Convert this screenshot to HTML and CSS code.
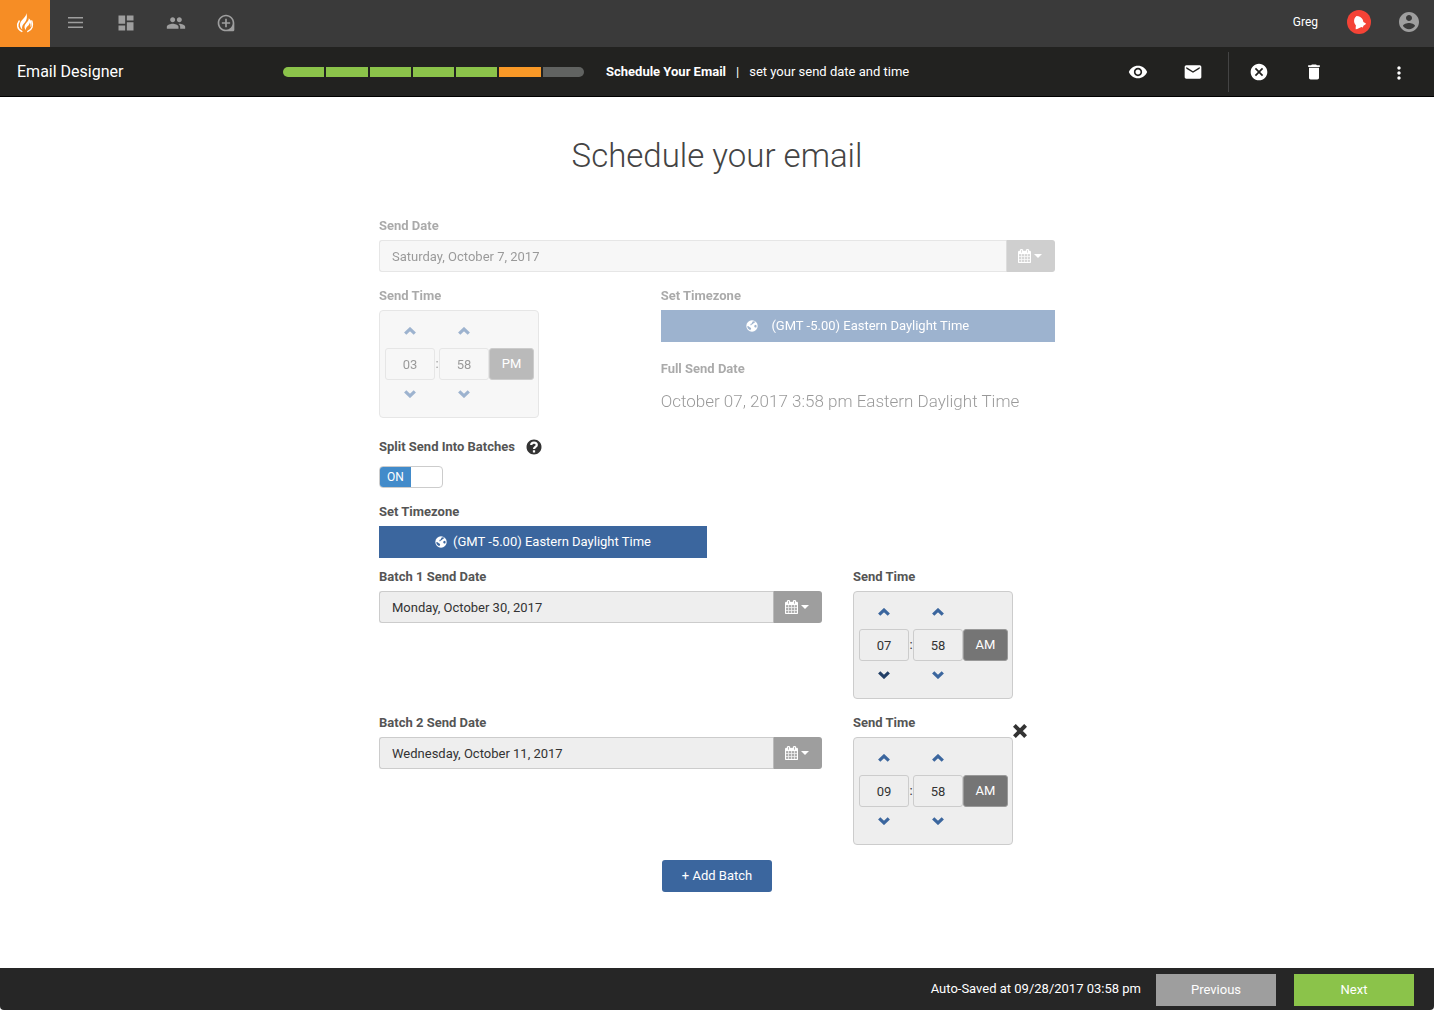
FILE: index.html
```html
<!DOCTYPE html>
<html lang="en">
<head>
<meta charset="utf-8">
<meta name="viewport" content="width=device-width, initial-scale=1">
<title>Email Designer</title>
<link rel="stylesheet" href="styles.css">
</head>
<body>
<svg class="sprite" aria-hidden="true">
  <symbol id="calendar" viewBox="0 0 1664 1792"><path d="M128 1664h288v-288h-288v288zm352 0h320v-288h-320v288zm-352-352h288v-320h-288v320zm352 0h320v-320h-320v320zm-352-384h288v-288h-288v288zm736 736h320v-288h-320v288zm-384-736h320v-288h-320v288zm768 736h288v-288h-288v288zm-384-352h320v-320h-320v320zm-352-864v-288q0-13-9.500-22.500t-22.500-9.500h-64q-13 0-22.500 9.500t-9.500 22.500v288q0 13 9.500 22.500t22.500 9.500h64q13 0 22.500-9.500t9.500-22.500zm736 864h288v-320h-288v320zm-384-384h320v-288h-320v288zm384 0h288v-288h-288v288zm32-480v-288q0-13-9.500-22.500t-22.500-9.500h-64q-13 0-22.500 9.500t-9.500 22.500v288q0 13 9.500 22.500t22.500 9.500h64q13 0 22.500-9.500t9.500-22.500zm384-64v1280q0 52-38 90t-90 38h-1408q-52 0-90-38t-38-90v-1280q0-52 38-90t90-38h128v-96q0-66 47-113t113-47h64q66 0 113 47t47 113v96h384v-96q0-66 47-113t113-47h64q66 0 113 47t47 113v96h128q52 0 90 38t38 90z" stroke="currentColor" stroke-width="40"/></symbol>
  <symbol id="caret" viewBox="0 0 8 4"><path d="M0 0h8L4 4z"/></symbol>
  <symbol id="up" viewBox="0 0 12 8"><path d="M1.200 6.700 6 2.100l4.800 4.600" fill="none" stroke="currentColor" stroke-width="3.200"/></symbol>
  <symbol id="down" viewBox="0 0 12 8"><path d="M1.200 1.300 6 5.900l4.800-4.600" fill="none" stroke="currentColor" stroke-width="3.200"/></symbol>
  <symbol id="globe" viewBox="0 0 12 12"><circle cx="6" cy="6" r="5.700"/><path class="globe-land" d="M6.600 1.400 8.300 1.300l1 1-1.600.6-.7 1.200-1.300.5-.7.8-.6-.4.300-1.200 1.100-.4zM8.500 5.200l1.500-.5.700 1.400-.5 1.500-1.200-.2-.8-.9zM1.300 5.900l1.300.4 1.500 1.200 1.100.6-.4 1.100-.5 1-1.500-.9L1.600 8z"/></symbol>
</svg>

<header class="topbar">
  <a class="logo" href="#" aria-label="Home"><svg width="18" height="22" viewBox="0 0 18 22"><path fill="none" stroke="#fff" stroke-width="1.500" stroke-linecap="round" d="M3.200 9C.8 12.500 1 17.300 5.800 19.400M15.800 9c1.600 4.500.3 8.700-4 10.400"/><path fill="#fff" d="M10.200 1c.8 3.300-4.800 6.300-6 10.300-.7 2.600.2 4.900 2.100 6.100-.8-2.800.4-4.700 2.300-6.700 1.700-1.900 3.300-5.300 1.600-9.700zM12.700 6.200c.5 2.900-3.500 4.800-4.100 7.700-.3 1.700.3 3.200 1.200 4.100 0-1.900.8-2.900 2-4 1.200-1.200 1.900-2 1.900-3.500.9 1.300 1 3 .6 4.800 2.300-2.800 1.500-7-1.600-9.100z"/></svg></a>
  <nav class="topnav" aria-label="Main">
    <a href="#" aria-label="Menu"><svg width="15" height="11" viewBox="0 0 15 11"><path d="M0 0h15v1.500H0zM0 4.700h15v1.500H0zM0 9.400h15v1.500H0z"/></svg></a>
    <a href="#" aria-label="Dashboard"><svg width="20" height="20" viewBox="0 0 24 24"><path d="M3 13h8V3H3v10zm0 8h8v-6H3v6zm10 0h8V11h-8v10zm0-18v6h8V3h-8z"/></svg></a>
    <a href="#" aria-label="Contacts"><svg width="20" height="20" viewBox="0 0 24 24"><path d="M16 11c1.660 0 2.990-1.340 2.990-3S17.660 5 16 5s-3 1.340-3 3 1.340 3 3 3zm-8 0c1.660 0 2.990-1.340 2.990-3S9.660 5 8 5 5 6.340 5 8s1.340 3 3 3zm0 2c-2.330 0-7 1.170-7 3.500V19h14v-2.500c0-2.330-4.670-3.500-7-3.500zm8 0c-.29 0-.62.02-.97.05 1.160.84 1.970 1.970 1.970 3.450V19h6v-2.500c0-2.330-4.670-3.500-7-3.500z"/></svg></a>
    <a href="#" aria-label="Add"><svg width="20" height="20" viewBox="0 0 24 24"><path d="M13 7h-2v4H7v2h4v4h2v-4h4v-2h-4V7zm-1-5C6.490 2 2 6.490 2 12s4.490 10 10 10h8c1.100 0 2-.9 2-2v-8c0-5.510-4.490-10-10-10zm0 18c-4.410 0-8-3.590-8-8s3.590-8 8-8 8 3.590 8 8-3.590 8-8 8z"/></svg></a>
  </nav>
  <div class="user">
    <span class="user-name">Greg</span>
    <button class="cell" aria-label="Notifications"><svg width="24" height="24" viewBox="0 0 24 24"><circle cx="12" cy="12" r="12" fill="#f44336"/><path fill="#fff" d="M8.300 7.300 9.500 6c2.700.2 5.300 1.500 6.300 3.700l.6 2.300 2.600 1.400-.6 1-2 1.400-.5 1.700-1.500-.5-4.200 2-1.500.3v-2.300l.3-1.300-1.500-2.500c-.7-2-.5-4.200.8-5.900z"/></svg></button>
    <button class="cell" aria-label="Account"><svg width="24" height="24" viewBox="0 0 24 24" fill="#9e9e9e"><path d="M12 2C6.480 2 2 6.480 2 12s4.480 10 10 10 10-4.480 10-10S17.520 2 12 2zm0 3c1.660 0 3 1.340 3 3s-1.340 3-3 3-3-1.340-3-3 1.340-3 3-3zm0 14.200c-2.500 0-4.710-1.280-6-3.220.03-1.990 4-3.080 6-3.080 1.990 0 5.970 1.090 6 3.080-1.290 1.940-3.500 3.220-6 3.220z"/></svg></button>
  </div>
</header>

<div class="toolbar">
  <div class="app-name">Email Designer</div>
  <div class="steps" role="img" aria-label="Step 6 of 7">
    <span class="step done"></span><span class="step done"></span><span class="step done"></span><span class="step done"></span><span class="step done"></span><span class="step current"></span><span class="step"></span>
  </div>
  <div class="step-text"><strong>Schedule Your Email</strong><span>|</span><span>set your send date and time</span></div>
  <div class="actions">
    <button class="action" aria-label="Preview"><svg width="20" height="20" viewBox="0 0 24 24"><path d="M12 4.500C7 4.500 2.730 7.610 1 12c1.730 4.390 6 7.500 11 7.500s9.270-3.110 11-7.500c-1.730-4.390-6-7.500-11-7.500zM12 17c-2.760 0-5-2.240-5-5s2.240-5 5-5 5 2.240 5 5-2.240 5-5 5zm0-8c-1.660 0-3 1.340-3 3s1.340 3 3 3 3-1.340 3-3-1.340-3-3-3z"/></svg></button>
    <button class="action" aria-label="Send test"><svg width="20" height="20" viewBox="0 0 24 24"><path d="M20 4H4c-1.100 0-1.990.9-1.990 2L2 18c0 1.100.9 2 2 2h16c1.100 0 2-.9 2-2V6c0-1.100-.9-2-2-2zm0 4l-8 5-8-5V6l8 5 8-5v2z"/></svg></button>
    <span class="divider"></span>
    <button class="action" aria-label="Cancel"><svg width="20" height="20" viewBox="0 0 24 24"><path d="M12 2C6.470 2 2 6.470 2 12s4.470 10 10 10 10-4.470 10-10S17.530 2 12 2zm5 13.590L15.590 17 12 13.410 8.410 17 7 15.590 10.590 12 7 8.410 8.410 7 12 10.590 15.590 7 17 8.410 13.410 12 17 15.590z"/></svg></button>
    <button class="action" aria-label="Delete"><svg width="20" height="20" viewBox="0 0 24 24"><path d="M6 19c0 1.100.9 2 2 2h8c1.100 0 2-.9 2-2V7H6v12zM19 4h-3.500l-1-1h-5l-1 1H5v2h14V4z"/></svg></button>
    <button class="more" aria-label="More"><svg width="20" height="20" viewBox="0 0 24 24"><path d="M12 8c1.100 0 2-.9 2-2s-.9-2-2-2-2 .9-2 2 .9 2 2 2zm0 2c-1.100 0-2 .9-2 2s.9 2 2 2 2-.9 2-2-.9-2-2-2zm0 6c-1.100 0-2 .9-2 2s.9 2 2 2 2-.9 2-2-.9-2-2-2z"/></svg></button>
  </div>
</div>

<main class="content">
  <h1>Schedule your email</h1>
  <form class="schedule">
    <fieldset class="main-send" disabled>
      <div class="field">
        <label for="send-date">Send Date</label>
        <div class="date-group">
          <input id="send-date" type="text" value="Saturday, October 7, 2017">
          <button type="button" aria-label="Pick date"><svg width="13" height="14"><use href="#calendar"/></svg><svg width="8" height="4"><use href="#caret"/></svg></button>
        </div>
      </div>
      <div class="send-row">
        <div class="field">
          <label for="hour">Send Time</label>
          <div class="time">
            <button type="button" class="arrow" aria-label="Hour up"><svg width="12" height="8"><use href="#up"/></svg></button>
            <span></span>
            <button type="button" class="arrow" aria-label="Minute up"><svg width="12" height="8"><use href="#up"/></svg></button>
            <span></span>
            <input id="hour" type="text" value="03"><span>:</span><input type="text" value="58" aria-label="Minute">
            <button type="button" class="meridian">PM</button>
            <button type="button" class="arrow" aria-label="Hour down"><svg width="12" height="8"><use href="#down"/></svg></button>
            <span></span>
            <button type="button" class="arrow" aria-label="Minute down"><svg width="12" height="8"><use href="#down"/></svg></button>
          </div>
        </div>
        <div class="zone-column">
          <div class="field">
            <label for="zone">Set Timezone</label>
            <button type="button" id="zone" class="zone wide"><svg width="12" height="12"><use href="#globe"/></svg>(GMT -5.00) Eastern Daylight Time</button>
          </div>
          <div class="full-date">
            <h2>Full Send Date</h2>
            <p>October 07, 2017 3:58 pm Eastern Daylight Time</p>
          </div>
        </div>
      </div>
    </fieldset>

    <div class="split">
      <div class="split-head">
        <label for="split">Split Send Into Batches</label>
        <svg width="18" height="18" viewBox="0 0 24 24" fill="#444"><path d="M12 2C6.480 2 2 6.480 2 12s4.480 10 10 10 10-4.480 10-10S17.520 2 12 2z"/><path fill="none" stroke="#fff" stroke-width="3" d="M8.300 9.400C8.300 7.300 9.900 6.200 12 6.200s3.700 1.100 3.700 3.200c0 2.500-3.700 2.600-3.700 5.300M12 16.200v3"/></svg>
      </div>
      <label class="switch"><input id="split" type="checkbox" role="switch" checked><span class="switch-on">ON</span></label>
    </div>

    <div class="field batch-zone">
      <label for="batch-tz">Set Timezone</label>
      <button type="button" id="batch-tz" class="zone"><svg width="12" height="12"><use href="#globe"/></svg>(GMT -5.00) Eastern Daylight Time</button>
    </div>

    <div class="batches">
      <div class="batch">
        <div class="field">
          <label for="batch-1">Batch 1 Send Date</label>
          <div class="date-group">
            <input id="batch-1" type="text" value="Monday, October 30, 2017">
            <button type="button" aria-label="Pick date"><svg width="13" height="14"><use href="#calendar"/></svg><svg width="8" height="4"><use href="#caret"/></svg></button>
          </div>
        </div>
        <div class="field">
          <label for="hour-1">Send Time</label>
          <div class="time">
            <button type="button" class="arrow" aria-label="Hour up"><svg width="12" height="8"><use href="#up"/></svg></button>
            <span></span>
            <button type="button" class="arrow" aria-label="Minute up"><svg width="12" height="8"><use href="#up"/></svg></button>
            <span></span>
            <input id="hour-1" type="text" value="07"><span>:</span><input type="text" value="58" aria-label="Minute">
            <button type="button" class="meridian">AM</button>
            <button type="button" class="arrow active" aria-label="Hour down"><svg width="12" height="8"><use href="#down"/></svg></button>
            <span></span>
            <button type="button" class="arrow" aria-label="Minute down"><svg width="12" height="8"><use href="#down"/></svg></button>
          </div>
        </div>
      </div>
      <div class="batch">
        <div class="field">
          <label for="batch-2">Batch 2 Send Date</label>
          <div class="date-group">
            <input id="batch-2" type="text" value="Wednesday, October 11, 2017">
            <button type="button" aria-label="Pick date"><svg width="13" height="14"><use href="#calendar"/></svg><svg width="8" height="4"><use href="#caret"/></svg></button>
          </div>
        </div>
        <div class="field">
          <label for="hour-2">Send Time</label>
          <div class="time">
            <button type="button" class="arrow" aria-label="Hour up"><svg width="12" height="8"><use href="#up"/></svg></button>
            <span></span>
            <button type="button" class="arrow" aria-label="Minute up"><svg width="12" height="8"><use href="#up"/></svg></button>
            <span></span>
            <input id="hour-2" type="text" value="09"><span>:</span><input type="text" value="58" aria-label="Minute">
            <button type="button" class="meridian">AM</button>
            <button type="button" class="arrow" aria-label="Hour down"><svg width="12" height="8"><use href="#down"/></svg></button>
            <span></span>
            <button type="button" class="arrow" aria-label="Minute down"><svg width="12" height="8"><use href="#down"/></svg></button>
          </div>
        </div>
        <button type="button" class="remove" aria-label="Remove batch"><svg width="14" height="14" viewBox="0 0 14 14"><path d="M2.800 2.800l8.400 8.400M11.200 2.800l-8.400 8.400" stroke="#333" stroke-width="4" stroke-linecap="square"/></svg></button>
      </div>
    </div>
    <button type="button" class="add">+ Add Batch</button>
  </form>
</main>

<footer class="footer">
  <span class="saved">Auto-Saved at 09/28/2017 03:58 pm</span>
  <button class="previous">Previous</button>
  <button class="next">Next</button>
</footer>
</body>
</html>
```

FILE: styles.css
```css
* { box-sizing: border-box; }

body {
  margin: 0;
  min-height: 100vh;
  display: flex;
  flex-direction: column;
  background: #fff;
  color: #333;
  font: 13px/20px Roboto, "Liberation Sans", sans-serif;
}

button, input { font: inherit; color: inherit; margin: 0; padding: 0; border: 0; }
button { background: none; cursor: pointer; }
svg { display: block; fill: currentColor; flex: none; }
.sprite { position: absolute; width: 0; height: 0; }

/* Top bar */
.topbar { display: flex; height: 47px; background: #3a3a3a; color: #9e9e9e; }
.logo { width: 50px; padding-bottom: 2px; display: grid; place-items: center; background: #f68d25; }
.topnav { display: flex; padding-bottom: 2px; }
.topnav a { width: 50px; padding-left: 1px; display: grid; place-items: center; color: inherit; }
.user { margin-left: auto; padding-bottom: 3px; display: flex; align-items: center; }
.user-name { color: #fff; font-size: 12px; margin-right: 16px; }
.cell { width: 50px; display: grid; place-items: center; }

/* Designer toolbar */
.toolbar {
  display: flex;
  align-items: center;
  height: 50px;
  padding-left: 17px;
  background: #222220;
  border-bottom: 1px solid #000;
  color: #fff;
}
.app-name { width: 266px; font-size: 16px; }
.steps { display: flex; gap: 2px; width: 301px; border-radius: 5px; overflow: hidden; }
.step { flex: 1; height: 10px; background: #616361; }
.step.done { background: #8bc34a; }
.step.current { background: #f99927; }
.step-text { display: flex; gap: 10px; margin-left: 22px; }
.actions { display: flex; align-items: center; margin-left: auto; }
.action { width: 55px; height: 40px; display: grid; place-items: center; }
.divider { width: 1px; height: 40px; margin: 0 2px 0 8px; background: #444; }
.more { width: 70px; height: 40px; margin-left: 23px; padding-top: 2px; display: grid; place-items: center; }

/* Page */
.content { flex: 1; padding: 39px 20px 0; }
h1 { margin: 0 0 40px; font-size: 33px; line-height: 40px; font-weight: 300; text-align: center; color: #444; }
.schedule { display: flex; flex-direction: column; max-width: 676px; margin: 0 auto; }
.main-send {
  display: flex;
  flex-direction: column;
  gap: 14px;
  min-width: 0;
  margin: 0;
  padding: 0;
  border: 0;
  opacity: .5;
}
.field { display: flex; flex-direction: column; gap: 4px; }
.field label, .split-head label, h2 { font-size: 13px; line-height: 20px; font-weight: 700; color: #555; }
.send-row { display: grid; grid-template-columns: 5fr 7fr; }

.date-group { display: flex; height: 32px; }
.date-group input {
  flex: 1;
  min-width: 0;
  padding: 2px 12px 0;
  background: #eee;
  border: 1px solid #ccc;
  border-right: 0;
  border-radius: 3px 0 0 3px;
}
.date-group button {
  display: flex;
  align-items: center;
  justify-content: center;
  gap: 3px;
  width: 49px;
  padding-right: 2px;
  background: #9e9e9e;
  border-left: 1px solid #bbb;
  border-radius: 0 3px 3px 0;
  color: #fff;
}

/* Time picker: hour, colon, minute, meridian */
.time {
  display: grid;
  grid-template: 33px 32px 30px / 50px 4px 50px 45px;
  width: 160px;
  height: 108px;
  padding: 4px 4px 0 5px;
  background: #eee;
  border: 1px solid #ccc;
  border-radius: 4px;
}
.time input {
  width: 50px;
  padding-top: 2px;
  background: #eee;
  border: 1px solid #ccc;
  border-radius: 3px;
  text-align: center;
}
.time span { line-height: 32px; text-align: center; }
.arrow { display: grid; place-items: center; color: #3b669e; }
.time .arrow { padding: 0 1px 2px 0; }
.arrow.active { color: #223f66; }
.meridian { background: #757575; border: 1px solid #999; border-radius: 3px; color: #fff; }

.zone {
  display: flex;
  align-items: center;
  justify-content: center;
  gap: 6px;
  height: 32px;
  background: #3b669e;
  color: #fff;
}
.zone.wide { gap: 13px; }
.globe-land { fill: #3b669e; }
.full-date { margin-top: 17px; }
.full-date h2 { margin: 0; }
.full-date p { margin: 10px 0 0; font-size: 17px; line-height: 24px; font-weight: 300; }

/* Batches */
.split { margin-top: 19px; }
.split-head { display: flex; align-items: center; gap: 10px; margin-bottom: 9px; }
.switch {
  display: flex;
  position: relative;
  width: 64px;
  height: 22px;
  border: 1px solid #ccc;
  border-radius: 4px;
  overflow: hidden;
}
.switch input { position: absolute; inset: 0; opacity: 0; }
.switch-on { width: 31px; background: #428bca; color: #fff; font-size: 12px; text-align: center; }
.batch-zone { width: 328px; max-width: 100%; margin-top: 14px; }
.batches { display: flex; flex-direction: column; gap: 14px; margin-top: 9px; }
.batch { display: grid; grid-template-columns: 1fr 160px 42px; align-items: start; }
.batch .date-group { margin-right: 31px; }
.remove { width: 14px; height: 14px; margin-top: 11px; }
.add { align-self: center; width: 110px; height: 32px; margin: 15px 0; background: #3b669e; border-radius: 3px; color: #fff; }

/* Footer */
.footer {
  display: flex;
  align-items: center;
  justify-content: flex-end;
  min-height: 42px;
  padding: 2px 20px 0;
  background: #262626;
  border-radius: 0 0 4px 4px;
  color: #fff;
}
.saved { margin-right: 15px; padding-bottom: 2px; }
.footer button { width: 120px; height: 32px; }
.previous { background: #9e9e9e; }
.footer .next { margin-left: 18px; background: #8bc34a; }
```
